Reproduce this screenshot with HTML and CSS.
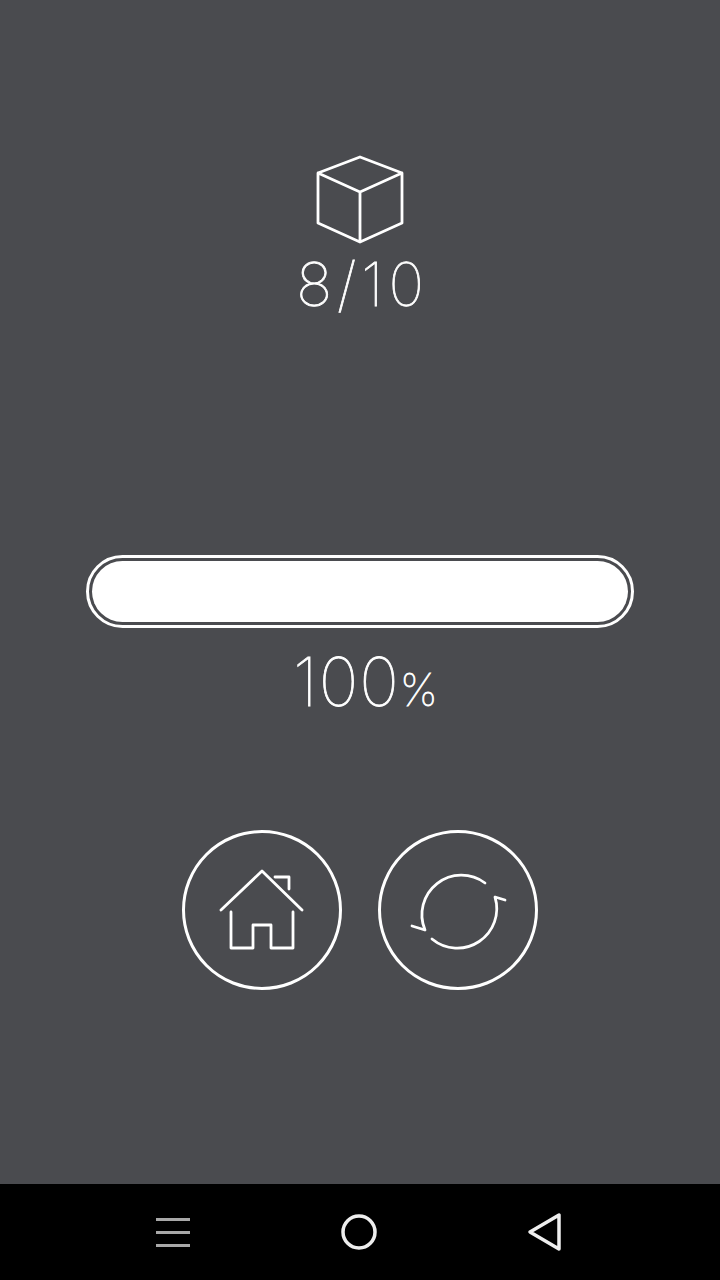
FILE: index.html
```html
<!DOCTYPE html>
<html lang="en">
<head>
    <meta charset="UTF-8">
    <title>Level Complete</title>
    <link rel="stylesheet" href="styles.css">
</head>
<body>

<div id="screen">
    <div id="content">
        <!-- Level counter -->
        <svg class="cube" width="90" height="90" viewBox="0 0 90 90">
            <path d="M45 2 L87 18 V68 L45 87 L3 68 V18 Z M3 18 L45 37 L87 18 M45 37 V87"/>
        </svg>
        <div class="big-text count">8/10</div>

        <!-- Progress -->
        <div class="progress"><div class="progress-fill"></div></div>
        <div class="big-text percent">100<span class="percent-sign">%</span></div>

        <!-- Buttons -->
        <div class="buttons">
            <div class="round-btn">
                <svg width="90" height="90" viewBox="0 0 90 90">
                    <path d="M4 45 L45 6 L85 45"/>
                    <path d="M58 12 H72 V24"/>
                    <path d="M14 47 V83 H36 V60 H54 V83 H76 V47"/>
                </svg>
            </div>
            <div class="round-btn">
                <svg width="100" height="100" viewBox="0 0 100 100">
                    <path d="M77 23 A39.5 39.5 0 0 0 17 70 L4 66"/>
                    <path d="M24 79 A39.5 39.5 0 0 0 87 37 L97 40"/>
                </svg>
            </div>
        </div>
    </div>

    <!-- Android navigation bar -->
    <div id="navbar">
        <div class="nav-menu"><span></span><span></span><span></span></div>
        <svg class="nav-home" width="36" height="36" viewBox="0 0 36 36">
            <circle cx="18" cy="18" r="16"/>
        </svg>
        <svg class="nav-back" width="36" height="40" viewBox="0 0 36 40">
            <path d="M4 20 L33 3 V37 Z"/>
        </svg>
    </div>
</div>

</body>
</html>
```

FILE: styles.css
```css
html, body {
    margin: 0;
    padding: 0;
}
#screen {
    width: 720px;
    height: 1280px;
    display: flex;
    flex-direction: column;
    background-color: #4a4b4f;
    overflow: hidden;
}
#content {
    flex: 1;
    display: flex;
    flex-direction: column;
    align-items: center;
    padding-top: 155px;
}
svg path, svg circle {
    fill: none;
    stroke: #ffffff;
    stroke-width: 2.8;
    stroke-linejoin: round;
    stroke-linecap: round;
}
.cube {
    display: block;
}
.big-text {
    font-family: "Inter", sans-serif;
    font-weight: 100;
    color: #ffffff;
    text-align: center;
    -webkit-text-stroke: 0.8px #ffffff;
}
.count {
    font-size: 60px;
    line-height: 62px;
    margin-top: 8px;
    letter-spacing: 5px;
    padding-left: 5px;
}
.progress {
    width: 548px;
    height: 73px;
    box-sizing: border-box;
    margin-top: 240px;
    padding: 3px;
    border: 3px solid #ffffff;
    border-radius: 37px;
}
.progress-fill {
    height: 100%;
    background-color: #ffffff;
    border-radius: 31px;
}
.percent {
    font-size: 67px;
    line-height: 68px;
    margin-top: 20px;
    padding-left: 12px;
    letter-spacing: 1px;
}
.percent-sign {
    font-size: 45px;
}
.buttons {
    display: flex;
    gap: 36px;
    margin-top: 106px;
}
.round-btn {
    width: 160px;
    height: 160px;
    box-sizing: border-box;
    border: 3px solid #ffffff;
    border-radius: 50%;
    display: flex;
    align-items: center;
    justify-content: center;
}
#navbar {
    height: 96px;
    background-color: #000000;
    display: flex;
    align-items: center;
    padding-left: 156px;
}
.nav-menu {
    width: 34px;
    display: flex;
    flex-direction: column;
    gap: 10px;
}
.nav-menu span {
    display: block;
    height: 3px;
    background-color: #a8a8a8;
}
.nav-home {
    margin-left: 151px;
}
.nav-home circle {
    stroke-width: 3.5;
    stroke: #eeeeee;
}
.nav-back {
    margin-left: 149px;
}
.nav-back path {
    stroke-width: 3.5;
    stroke: #eeeeee;
}
```
